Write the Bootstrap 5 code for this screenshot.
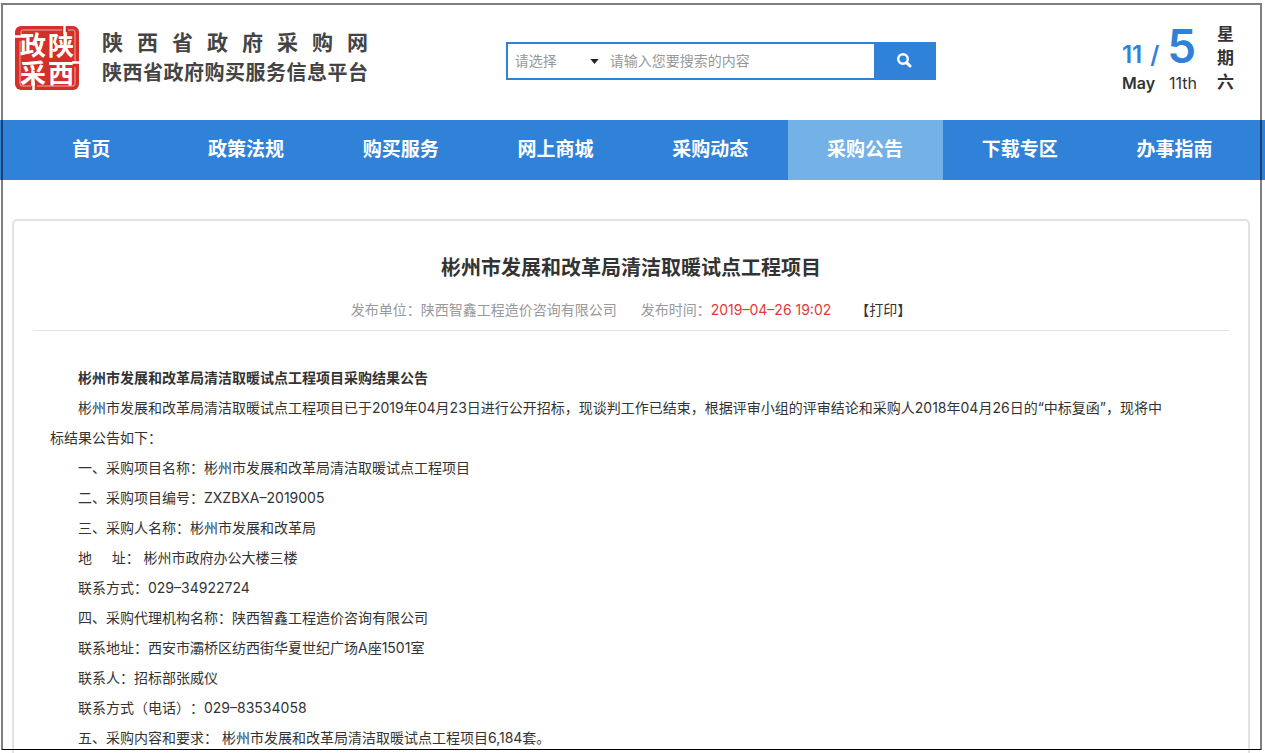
<!DOCTYPE html>
<html lang="zh-CN">
<head>
<meta charset="utf-8">
<meta name="viewport" content="width=device-width, initial-scale=1">
<title>陕西省政府采购网</title>
<link href="https://cdn.jsdelivr.net/npm/bootstrap@5.3.0/dist/css/bootstrap.min.css" rel="stylesheet">
<style>
  :root { --site-blue: #3082d9; --site-blue-light: #73b1e6; }
  body { font-family: Inter, "Noto Sans CJK SC", sans-serif; font-size: 14px; color: #333; background: #fff; text-spacing-trim: space-all; }
  .page-frame { inset: 3px 3px 3px 1px; border: 2px solid rgba(0,0,0,.5); border-bottom: 1px solid #000; pointer-events: none; z-index: 10; }
  .gutter { padding-left: 14px; padding-right: 13px; }

  .site-header { display: grid; grid-template-columns: 14fr 430px 9fr; align-items: start; height: 120px; }
  .brand { margin-top: 26px; gap: 22px; color: #444; }
  .brand svg { width: 66px; height: 66px; }
  .brand-lines { width: 266px; padding-top: 2px; font-size: 21px; font-weight: 700; line-height: 30px; }
  .brand-lines span { display: block; text-align: justify; text-align-last: justify; white-space: nowrap; }
  .brand-lines .second { font-size: 20px; }
  .seal { font-family: "Noto Sans CJK SC", sans-serif; font-weight: 700; font-size: 26px; fill: #fff; }

  .search { margin-top: 42px; height: 38px; border: 2px solid var(--site-blue); }
  .search .form-select, .search .form-control { border: 0; border-radius: 0; box-shadow: none; font-size: 14px; padding: 0 0 2px; color: #999; background-color: #fff; }
  .search .form-select { flex: 0 0 95px; padding-left: 7px; background-position: right 4px center; background-size: 9px 5px;
    background-image: url("data:image/svg+xml,%3Csvg xmlns='http://www.w3.org/2000/svg' viewBox='0 0 10 6'%3E%3Cpath d='M0 0h10L5 6z' fill='%23222'/%3E%3C/svg%3E"); }
  .search .form-control { padding-left: 7px; }
  .search .form-control::placeholder { color: #999; opacity: 1; }
  .search .btn { flex: 0 0 60px; border: 0; border-radius: 0; background: var(--site-blue); padding: 0; }

  .date-box { margin-top: 22px; margin-right: 18px; gap: 20px; }
  .date-num { color: var(--site-blue); font-size: 24px; font-weight: 600; line-height: 48px; height: 48px; gap: 8px; }
  .date-num .day { font-size: 46px; font-weight: 600; }
  .date-en { font-size: 16px; line-height: 26px; gap: 14px; }
  .weekday { width: 17px; font-size: 17px; font-weight: 700; line-height: 24px; }

  .main-nav { background: var(--site-blue); }
  .main-nav .nav-link { color: #fff; font-size: 19px; font-weight: 700; line-height: 60px; padding: 0; border-radius: 0; }
  .main-nav .nav-link.active { background: var(--site-blue-light); }

  .notice { margin: 39px 15px 0 12px; border: 2px solid #e2e2e2; border-bottom: 0; border-radius: 5px 5px 0 0; padding: 32px 19px 0; }
  .notice h1 { font-size: 20px; font-weight: 700; line-height: 30px; margin: 0 0 13px; }
  .meta { gap: 24px; color: #999; line-height: 28px; padding-bottom: 6px; border-bottom: 1px solid #e2e2e2; }
  .meta time { color: #e4393c; }
  .meta a { color: #333; text-decoration: none; }
  .notice-text { padding: 32px 64px 0 17px; line-height: 30px; }
  .notice-text p { margin: 0; text-indent: 28px; }
</style>
</head>
<body class="min-vh-100 d-flex flex-column">
<div class="page-frame position-fixed"></div>

<header class="site-header gutter">
  <div class="brand d-flex">
    <svg viewBox="0 0 66 66" role="img" aria-label="陕西政采">
      <rect x="1" y="0" width="64" height="64" rx="6" fill="#d4302b"/>
      <path d="M7 9V6q0-2 2-2h39M54 4h5q2 0 2 2v30M61 41v17q0 2-2 2H23M17 60H8q-2 0-2-2V15" fill="none" stroke="#f0a8a0" stroke-width="1"/>
      <path d="M0 10.500h12M50.500 0v8M58 36.500h8M19.500 56v8" fill="none" stroke="#fff" stroke-width="2.500"/>
      <g class="seal">
        <text x="6" y="29">政</text><text x="34" y="29">陕</text>
        <text x="6" y="57">采</text><text x="34" y="57">西</text>
      </g>
    </svg>
    <div class="brand-lines">
      <span>陕西省政府采购网</span>
      <span class="second">陕西省政府购买服务信息平台</span>
    </div>
  </div>

  <form class="search d-flex" onsubmit="return false">
    <select class="form-select" aria-label="搜索类别"><option>请选择</option></select>
    <input class="form-control" type="text" placeholder="请输入您要搜索的内容" aria-label="搜索内容">
    <button class="btn" type="submit" aria-label="搜索">
      <svg class="d-block mx-auto" width="16" height="16" viewBox="0 0 16 16" fill="none" stroke="#fff"><circle cx="7" cy="6" r="4.800" stroke-width="2.400"/><path d="M10.600 9.600l3.400 3.400" stroke-width="3" stroke-linecap="round"/></svg>
    </button>
  </form>

  <div class="date-box d-flex justify-content-end">
    <div>
      <div class="date-num d-flex align-items-baseline"><span>11</span><span>/</span><span class="day">5</span></div>
      <div class="date-en d-flex"><span class="fw-semibold">May</span><span>11th</span></div>
    </div>
    <div class="weekday">星期六</div>
  </div>
</header>

<nav class="main-nav gutter">
  <div class="nav nav-justified">
    <a class="nav-link" href="#">首页</a>
    <a class="nav-link" href="#">政策法规</a>
    <a class="nav-link" href="#">购买服务</a>
    <a class="nav-link" href="#">网上商城</a>
    <a class="nav-link" href="#">采购动态</a>
    <a class="nav-link active" aria-current="page" href="#">采购公告</a>
    <a class="nav-link" href="#">下载专区</a>
    <a class="nav-link" href="#">办事指南</a>
  </div>
</nav>

<main class="notice flex-grow-1">
  <h1 class="text-center">彬州市发展和改革局清洁取暖试点工程项目</h1>
  <div class="meta d-flex justify-content-center">
    <span>发布单位：陕西智鑫工程造价咨询有限公司</span>
    <span>发布时间：<time datetime="2019-04-26T19:02">2019–04–26 19:02</time></span>
    <a href="#">【打印】</a>
  </div>
  <article class="notice-text">
    <p><strong>彬州市发展和改革局清洁取暖试点工程项目采购结果公告</strong></p>
    <p>彬州市发展和改革局清洁取暖试点工程项目已于2019年04月23日进行公开招标，现谈判工作已结束，根据评审小组的评审结论和采购人2018年04月26日的“中标复函”，现将中标结果公告如下：</p>
    <p>一、采购项目名称：彬州市发展和改革局清洁取暖试点工程项目</p>
    <p>二、采购项目编号：ZXZBXA–2019005</p>
    <p>三、采购人名称：彬州市发展和改革局</p>
    <p>地&nbsp;&nbsp;&nbsp;&nbsp;&nbsp;址： 彬州市政府办公大楼三楼</p>
    <p>联系方式：029–34922724</p>
    <p>四、采购代理机构名称：陕西智鑫工程造价咨询有限公司</p>
    <p>联系地址：西安市灞桥区纺西街华夏世纪广场A座1501室</p>
    <p>联系人：招标部张威仪</p>
    <p>联系方式（电话）：029–83534058</p>
    <p>五、采购内容和要求： 彬州市发展和改革局清洁取暖试点工程项目6,184套。</p>
  </article>
</main>
<script src="https://cdn.jsdelivr.net/npm/bootstrap@5.3.0/dist/js/bootstrap.bundle.min.js"></script>
</body>
</html>
